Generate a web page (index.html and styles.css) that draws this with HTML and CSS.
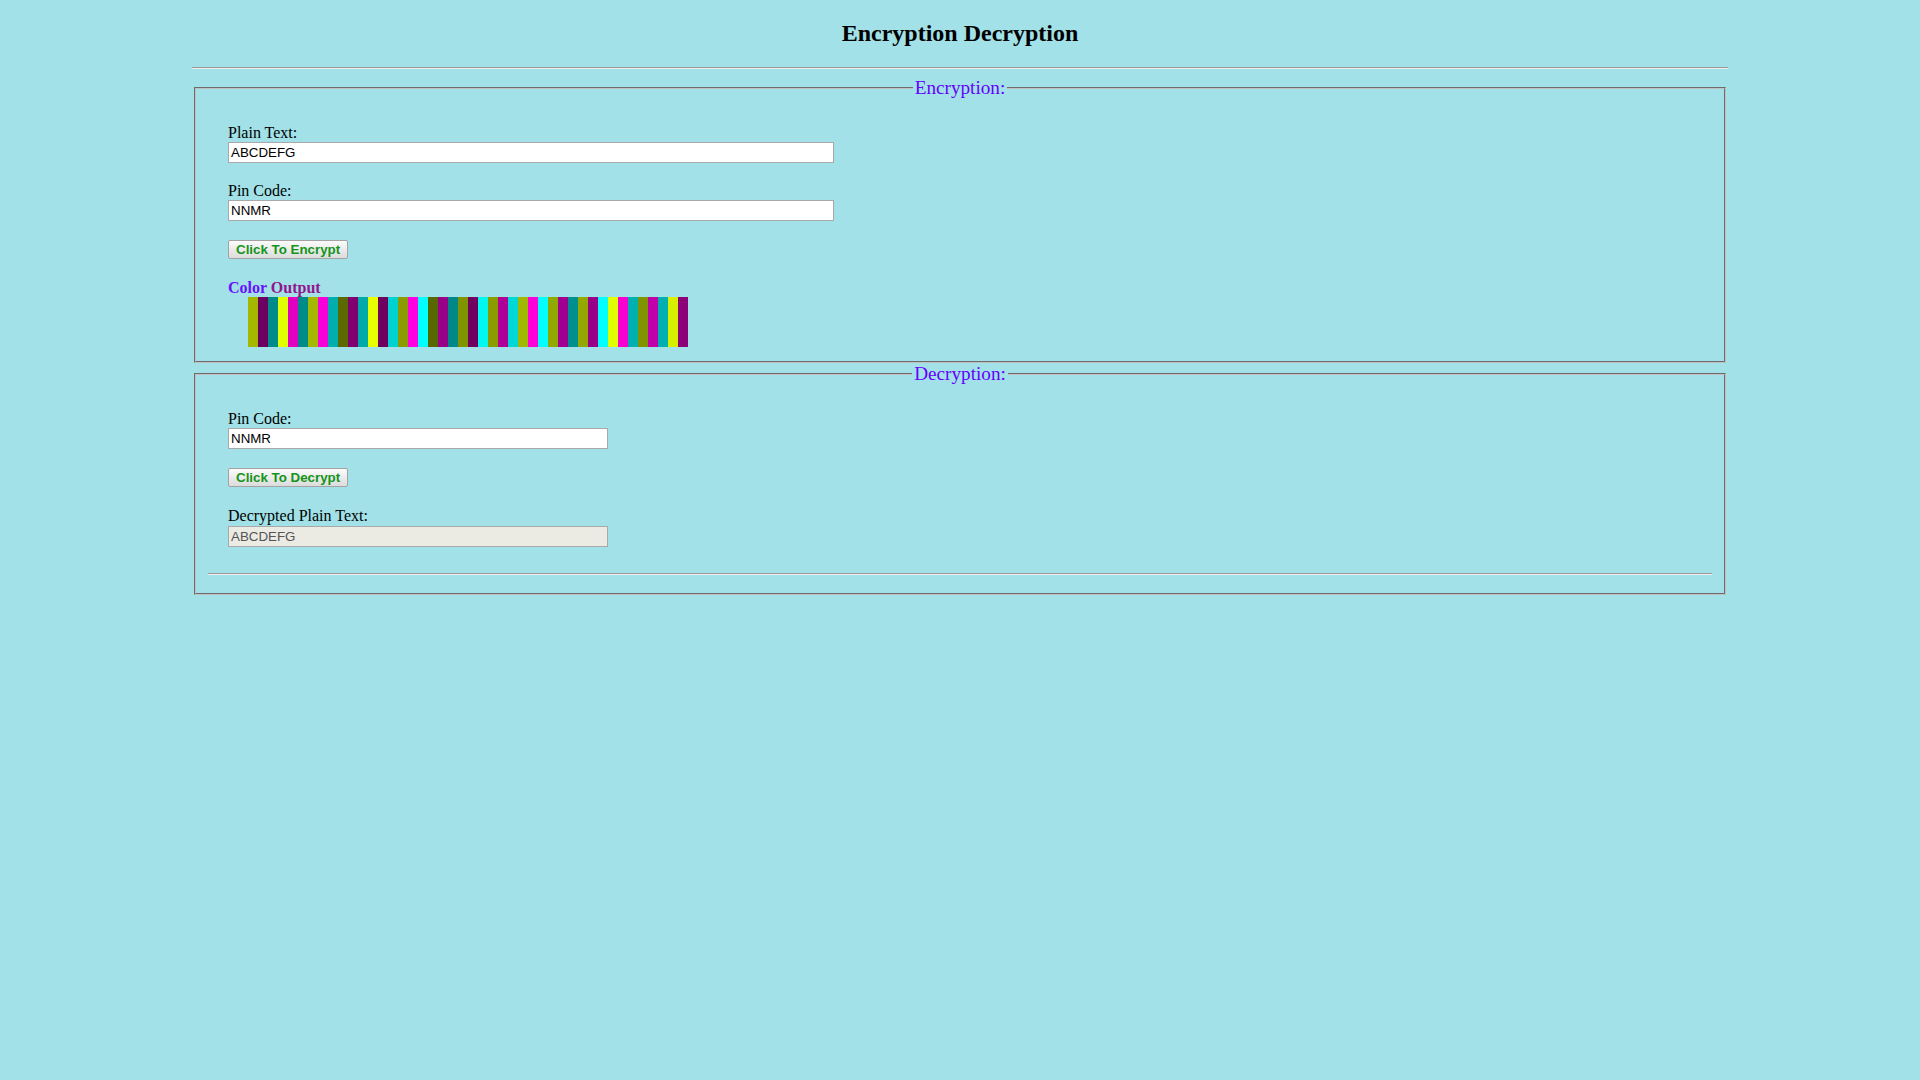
FILE: index.html
```
<!DOCTYPE html>
<html>
<head>
<meta charset="utf-8">
<title>Encryption Decryption</title>
<link rel="stylesheet" href="styles.css">
</head>
<body>
<h2 class="title">Encryption Decryption</h2>
<hr class="rule">
<div class="wrap">
  <fieldset class="panel">
    <legend class="legend">Encryption:</legend>
    <div class="body">
      <div class="field">
        <label class="label">Plain Text:</label>
        <input class="input wide" type="text" value="ABCDEFG">
      </div>
      <div class="field">
        <label class="label">Pin Code:</label>
        <input class="input wide" type="text" value="NNMR">
      </div>
      <div class="action">
        <button class="btn" type="button">Click To Encrypt</button>
      </div>
      <div class="output-title"><span class="c1">Color</span> <span class="c2">Output</span></div>
      <div class="bars">
        <span class="bar" style="background:#a4b800"></span>
        <span class="bar" style="background:#6c0060"></span>
        <span class="bar" style="background:#008b8b"></span>
        <span class="bar" style="background:#e0ff00"></span>
        <span class="bar" style="background:#e000c0"></span>
        <span class="bar" style="background:#008b8b"></span>
        <span class="bar" style="background:#a4b800"></span>
        <span class="bar" style="background:#f800d8"></span>
        <span class="bar" style="background:#00aeae"></span>
        <span class="bar" style="background:#5a6a00"></span>
        <span class="bar" style="background:#800070"></span>
        <span class="bar" style="background:#00aaaa"></span>
        <span class="bar" style="background:#e8ff00"></span>
        <span class="bar" style="background:#700060"></span>
        <span class="bar" style="background:#00d2d2"></span>
        <span class="bar" style="background:#8c9c00"></span>
        <span class="bar" style="background:#ff00e0"></span>
        <span class="bar" style="background:#00ffff"></span>
        <span class="bar" style="background:#586800"></span>
        <span class="bar" style="background:#980088"></span>
        <span class="bar" style="background:#008888"></span>
        <span class="bar" style="background:#809400"></span>
        <span class="bar" style="background:#700060"></span>
        <span class="bar" style="background:#00f8f0"></span>
        <span class="bar" style="background:#8a9c00"></span>
        <span class="bar" style="background:#b00098"></span>
        <span class="bar" style="background:#00d8d8"></span>
        <span class="bar" style="background:#a0b800"></span>
        <span class="bar" style="background:#ff00d8"></span>
        <span class="bar" style="background:#00ffff"></span>
        <span class="bar" style="background:#90a800"></span>
        <span class="bar" style="background:#a00090"></span>
        <span class="bar" style="background:#008f8f"></span>
        <span class="bar" style="background:#94a800"></span>
        <span class="bar" style="background:#980088"></span>
        <span class="bar" style="background:#00ffff"></span>
        <span class="bar" style="background:#e0ff00"></span>
        <span class="bar" style="background:#f800d0"></span>
        <span class="bar" style="background:#00b0b0"></span>
        <span class="bar" style="background:#809400"></span>
        <span class="bar" style="background:#c000a8"></span>
        <span class="bar" style="background:#00b0b0"></span>
        <span class="bar" style="background:#d8f000"></span>
        <span class="bar" style="background:#8c0078"></span>
      </div>
    </div>
  </fieldset>
  <fieldset class="panel">
    <legend class="legend">Decryption:</legend>
    <div class="body">
      <div class="field">
        <label class="label">Pin Code:</label>
        <input class="input narrow" type="text" value="NNMR">
      </div>
      <div class="action">
        <button class="btn" type="button">Click To Decrypt</button>
      </div>
      <div class="field">
        <label class="label">Decrypted Plain Text:</label>
        <input class="input narrow" type="text" value="ABCDEFG" disabled>
      </div>
    </div>
    <hr class="rule inner">
  </fieldset>
</div>
</body>
</html>
```
FILE: styles.css
```
html, body {
  margin: 0;
  padding: 0;
}
body {
  background: #a1e1e7;
  font-family: "Liberation Serif", "Times New Roman", serif;
  font-size: 16px;
  color: #000;
}
.title {
  font-size: 24px;
  font-weight: bold;
  text-align: center;
  margin: 19.92px 0;
  line-height: 27.6px;
}
.rule {
  display: block;
  width: 80%;
  height: 0;
  margin: 8px auto;
  border: 0;
  border-top: 1px solid #999999;
  border-bottom: 1px solid #eeeeee;
}
.rule.inner {
  width: auto;
  margin: 26.5px 0 8px 0;
}
.wrap {
  width: 80%;
  margin: 0 auto;
}
.panel {
  margin: 0 2px;
  padding: 5.6px 12px 10px 12px;
  border: 2px groove #c0c0c0;
  min-width: 0;
}
.legend {
  margin: 0 auto;
  padding: 0 2px;
  font-size: 19.2px;
  line-height: 22.08px;
  color: #6600ff;
}
.body {
  padding-left: 20px;
  padding-top: 0.5px;
}
.field {
  margin-top: 18.4px;
}
.label {
  display: block;
  line-height: 18.4px;
}
.input {
  display: block;
  box-sizing: border-box;
  height: 21px;
  margin: 0;
  padding: 1px 2px;
  border: 1px solid #a9a9a9;
  border-radius: 0;
  background: #ffffff;
  font-family: "Liberation Sans", Arial, sans-serif;
  font-size: 13.33px;
  color: #000;
  outline: none;
}
.input:disabled {
  background: #ebebe4;
  color: #545454;
}
.wide {
  width: 606px;
}
.narrow {
  width: 380px;
}
.action {
  margin-top: 18.4px;
  padding-bottom: 2px;
}
.btn {
  display: block;
  box-sizing: border-box;
  height: 19px;
  margin: 0;
  padding: 0 7px;
  border: 1px solid #a3a3a3;
  border-radius: 2px;
  background: linear-gradient(#fbfbfb, #dcdcdc);
  font-family: "Liberation Sans", Arial, sans-serif;
  font-size: 13.33px;
  font-weight: bold;
  line-height: 15px;
  color: #13941a;
}
.output-title {
  margin-top: 18.4px;
  line-height: 18.4px;
  font-weight: bold;
}
.c1 {
  color: #6a10ff;
}
.c2 {
  color: #93168f;
}
.bars {
  display: flex;
  margin-left: 20px;
  margin-bottom: 4px;
  height: 50px;
}
.bar {
  display: block;
  width: 10px;
  height: 50px;
}
```
